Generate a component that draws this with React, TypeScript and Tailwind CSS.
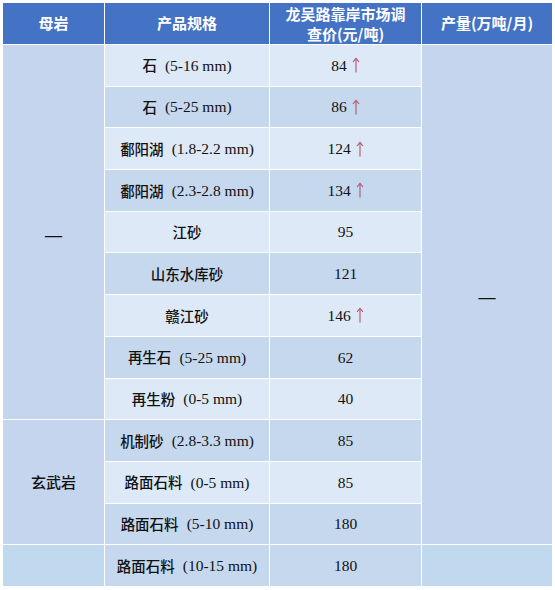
import React from 'react';

type Row = { spec: string; size?: string; price: string; up?: boolean; dark: boolean };

const rows: Row[] = [
  { spec: '石', size: '(5-16 mm)', price: '84', up: true, dark: false },
  { spec: '石', size: '(5-25 mm)', price: '86', up: true, dark: true },
  { spec: '鄱阳湖', size: '(1.8-2.2 mm)', price: '124', up: true, dark: false },
  { spec: '鄱阳湖', size: '(2.3-2.8 mm)', price: '134', up: true, dark: true },
  { spec: '江砂', price: '95', dark: false },
  { spec: '山东水库砂', price: '121', dark: true },
  { spec: '赣江砂', price: '146', up: true, dark: false },
  { spec: '再生石', size: '(5-25 mm)', price: '62', dark: true },
  { spec: '再生粉', size: '(0-5 mm)', price: '40', dark: false },
  { spec: '机制砂', size: '(2.8-3.3 mm)', price: '85', dark: true },
  { spec: '路面石料', size: '(0-5 mm)', price: '85', dark: false },
  { spec: '路面石料', size: '(5-10 mm)', price: '180', dark: true },
  { spec: '路面石料', size: '(10-15 mm)', price: '180', dark: true },
];

const rowStart = [
  'row-start-2', 'row-start-3', 'row-start-4', 'row-start-5', 'row-start-6', 'row-start-7', 'row-start-8',
  'row-start-9', 'row-start-10', 'row-start-11', 'row-start-12', 'row-start-13', 'row-start-14',
];

function UpArrow() {
  return (
    <svg width="8" height="16" viewBox="0 0 8 16" className="ml-[5px] inline-block">
      <path d="M4 15.5V2" stroke="#b2546c" strokeWidth="1.1" fill="none" />
      <path d="M1 5L4 1.3L7 5" stroke="#b2546c" strokeWidth="1.1" fill="none" />
    </svg>
  );
}

const cjk = 'font-["Noto_Sans_CJK_SC",sans-serif]';
const serif = 'font-["Liberation_Serif","Noto_Sans_CJK_SC",serif]';

export default function App() {
  return (
    <div className="w-[555px] h-[590px] bg-white pt-[3px] pl-[3px]">
      <div className="grid w-[549px] grid-cols-[101px_164px_151px_130px] grid-rows-[41px_repeat(13,40.7px)] gap-px bg-white text-[#111]">
        {/* header */}
        <div className={`row-start-1 col-start-1 bg-[#4472c4] flex items-center justify-center text-white font-bold text-[15px] ${cjk}`}>母岩</div>
        <div className={`row-start-1 col-start-2 bg-[#4472c4] flex items-center justify-center text-white font-bold text-[15px] ${cjk}`}>产品规格</div>
        <div className={`row-start-1 col-start-3 bg-[#4472c4] flex flex-col items-center justify-center text-white font-bold text-[15px] leading-[20px] ${cjk}`}>
          <span>龙吴路靠岸市场调</span>
          <span>查价(元/吨)</span>
        </div>
        <div className={`row-start-1 col-start-4 bg-[#4472c4] flex items-center justify-center text-white font-bold text-[15px] ${cjk}`}>产量(万吨/月)</div>

        {/* merged cells */}
        <div className={`col-start-1 row-start-2 row-span-9 bg-[#c4d5ed] flex items-center justify-center pt-[8px] text-[17px] font-bold ${serif}`}>—</div>
        <div className={`col-start-1 row-start-11 row-span-3 bg-[#c4d5ed] flex items-center justify-center text-[15px] font-medium ${cjk}`}>玄武岩</div>
        <div className="col-start-1 row-start-14 bg-[#c1d9ee]" />
        <div className={`col-start-4 row-start-2 row-span-12 bg-[#c4d5ed] flex items-center justify-center pt-[6px] text-[17px] font-bold ${serif}`}>—</div>
        <div className="col-start-4 row-start-14 bg-[#c1d9ee]" />

        {rows.map((r, i) => (
          <React.Fragment key={i}>
            <div className={`${rowStart[i]} col-start-2 ${r.dark ? 'bg-[#c6d8ee]' : 'bg-[#dde9f6]'} flex items-center justify-center text-[15.5px]`}>
              <span className={`font-medium text-[14.5px] ${cjk}`}>{r.spec}</span>
              {r.size && <span className={`ml-[8px] ${serif}`}>{r.size}</span>}
            </div>
            <div className={`${rowStart[i]} col-start-3 ${r.dark ? 'bg-[#c6d8ee]' : 'bg-[#dde9f6]'} flex items-center justify-center text-[15.5px] ${serif}`}>
              <span>{r.price}</span>
              {r.up && <UpArrow />}
            </div>
          </React.Fragment>
        ))}
      </div>
    </div>
  );
}
